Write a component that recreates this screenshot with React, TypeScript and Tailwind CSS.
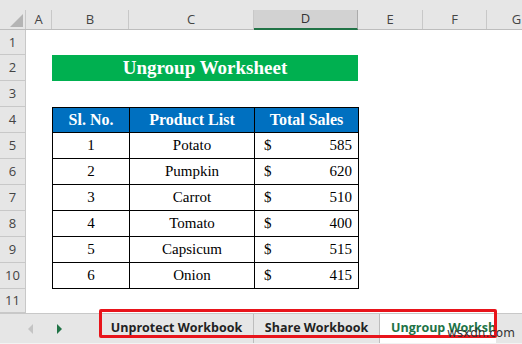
import React from 'react';

const colHeads = [
  { label: 'A', w: 'w-[26px]' },
  { label: 'B', w: 'w-[77px]' },
  { label: 'C', w: 'w-[125px]' },
  { label: 'D', w: 'w-[104px]', active: true },
  { label: 'E', w: 'w-[65px]' },
  { label: 'F', w: 'w-[64px]' },
  { label: 'G', w: 'w-[60px]' },
];

const rows = [
  { no: 1, name: 'Potato', sales: 585 },
  { no: 2, name: 'Pumpkin', sales: 620 },
  { no: 3, name: 'Carrot', sales: 510 },
  { no: 4, name: 'Tomato', sales: 400 },
  { no: 5, name: 'Capsicum', sales: 515 },
  { no: 6, name: 'Onion', sales: 415 },
];

const RowHead = ({ n }: { n: number }) => (
  <div className="w-[26px] shrink-0 h-full bg-[#e6e6e6] border-r border-b border-[#c8c8c8] flex items-center justify-center text-[13px] text-[#444] pt-[1px]">
    {n}
  </div>
);

export default function App() {
  const serif = { fontFamily: '"Liberation Serif", "Times New Roman", serif' };
  return (
    <div
      className="relative w-[522px] h-[344px] overflow-hidden bg-white"
      style={{ fontFamily: '"Open Sans", "Noto Sans", sans-serif' }}
    >
      {/* column headers */}
      <div className="h-[10px] bg-[#e6e6e6]" />
      <div className="flex h-[20px] bg-[#e6e6e6] border-b border-[#bdbdbd]">
        <div className="w-[26px] shrink-0 border-r border-[#c8c8c8] flex items-end justify-end p-[2px]">
          <div className="w-0 h-0 border-l-[13px] border-l-transparent border-b-[13px] border-b-[#b4b4b4]" />
        </div>
        {colHeads.map((c) => (
          <div
            key={c.label}
            className={`${c.w} shrink-0 flex items-center justify-center text-[13px] border-r ${
              c.active
                ? 'bg-[#d2d2d2] text-[#333] border-[#ababab] border-b-2 border-b-[#217346] -mb-[1px]'
                : 'text-[#444] border-[#c8c8c8]'
            }`}
          >
            {c.label}
          </div>
        ))}
      </div>

      {/* row 1 */}
      <div className="flex h-[25px]">
        <RowHead n={1} />
      </div>

      {/* row 2 title */}
      <div className="flex h-[26px]">
        <RowHead n={2} />
        <div className="w-[26px] shrink-0" />
        <div
          className="w-[306px] shrink-0 bg-[#00b050] text-white font-bold text-[19px] flex items-center justify-center"
          style={serif}
        >
          Ungroup Worksheet
        </div>
      </div>

      {/* row 3 */}
      <div className="flex h-[26px]">
        <RowHead n={3} />
      </div>

      {/* row 4 header */}
      <div className="flex h-[26px]">
        <RowHead n={4} />
        <div className="w-[26px] shrink-0" />
        <div className="flex border-l border-t border-black bg-[#0070c0] text-white font-bold text-[16px]" style={serif}>
          <div className="w-[77px] border-r border-b border-black flex items-center justify-center">Sl. No.</div>
          <div className="w-[125px] border-r border-b border-black flex items-center justify-center">Product List</div>
          <div className="w-[104px] border-r border-b border-black flex items-center justify-center">Total Sales</div>
        </div>
      </div>

      {/* data rows */}
      {rows.map((r, i) => (
        <div key={r.no} className="flex h-[26px]">
          <RowHead n={i + 5} />
          <div className="w-[26px] shrink-0" />
          <div className="flex border-l border-black text-[15px] text-black" style={serif}>
            <div className="w-[77px] border-r border-b border-black flex items-center justify-center">{r.no}</div>
            <div className="w-[125px] border-r border-b border-black flex items-center justify-center">{r.name}</div>
            <div className="w-[104px] border-r border-b border-black flex items-center justify-between pl-[9px] pr-[6px]">
              <span>$</span>
              <span>{r.sales}</span>
            </div>
          </div>
        </div>
      ))}

      {/* row 11 */}
      <div className="flex h-[24px]">
        <RowHead n={11} />
      </div>

      {/* sheet tabs */}
      <div className="flex h-[30px] bg-[#e6e6e6] border-t border-[#c8c8c8]">
        <div className="w-[100px] shrink-0 flex items-center">
          <div className="ml-[28px] w-0 h-0 border-y-[5px] border-y-transparent border-r-[5px] border-r-[#c4c4c4]" />
          <div className="ml-[24px] w-0 h-0 border-y-[5px] border-y-transparent border-l-[5px] border-l-[#217346]" />
        </div>
        <div className="w-[396px] shrink-0 flex overflow-hidden text-[12.5px] font-bold whitespace-nowrap">
          <div className="w-[154px] shrink-0 flex items-center justify-center text-[#222] border-r border-[#bdbdbd]">
            Unprotect Workbook
          </div>
          <div className="w-[126px] shrink-0 flex items-center justify-center text-[#222] border-r border-[#bdbdbd]">
            Share Workbook
          </div>
          <div className="shrink-0 flex items-center pl-[11px] pr-4 bg-white text-[#217346] -mt-[1px]">
            Ungroup Worksheet
          </div>
        </div>
      </div>
      <div className="h-[2px] bg-[#f3f3f3]" />

      {/* highlight box */}
      <div className="absolute left-[99px] top-[309px] w-[398px] h-[29px] border-[3px] border-[#e8141b] rounded-[2px]" />

      {/* watermark */}
      <div
        className="absolute left-[447px] top-[327px] text-[12px] leading-none text-[#333]"
        style={{ fontFamily: '"DejaVu Sans", sans-serif' }}
      >
        wsxdn.com
      </div>
    </div>
  );
}
